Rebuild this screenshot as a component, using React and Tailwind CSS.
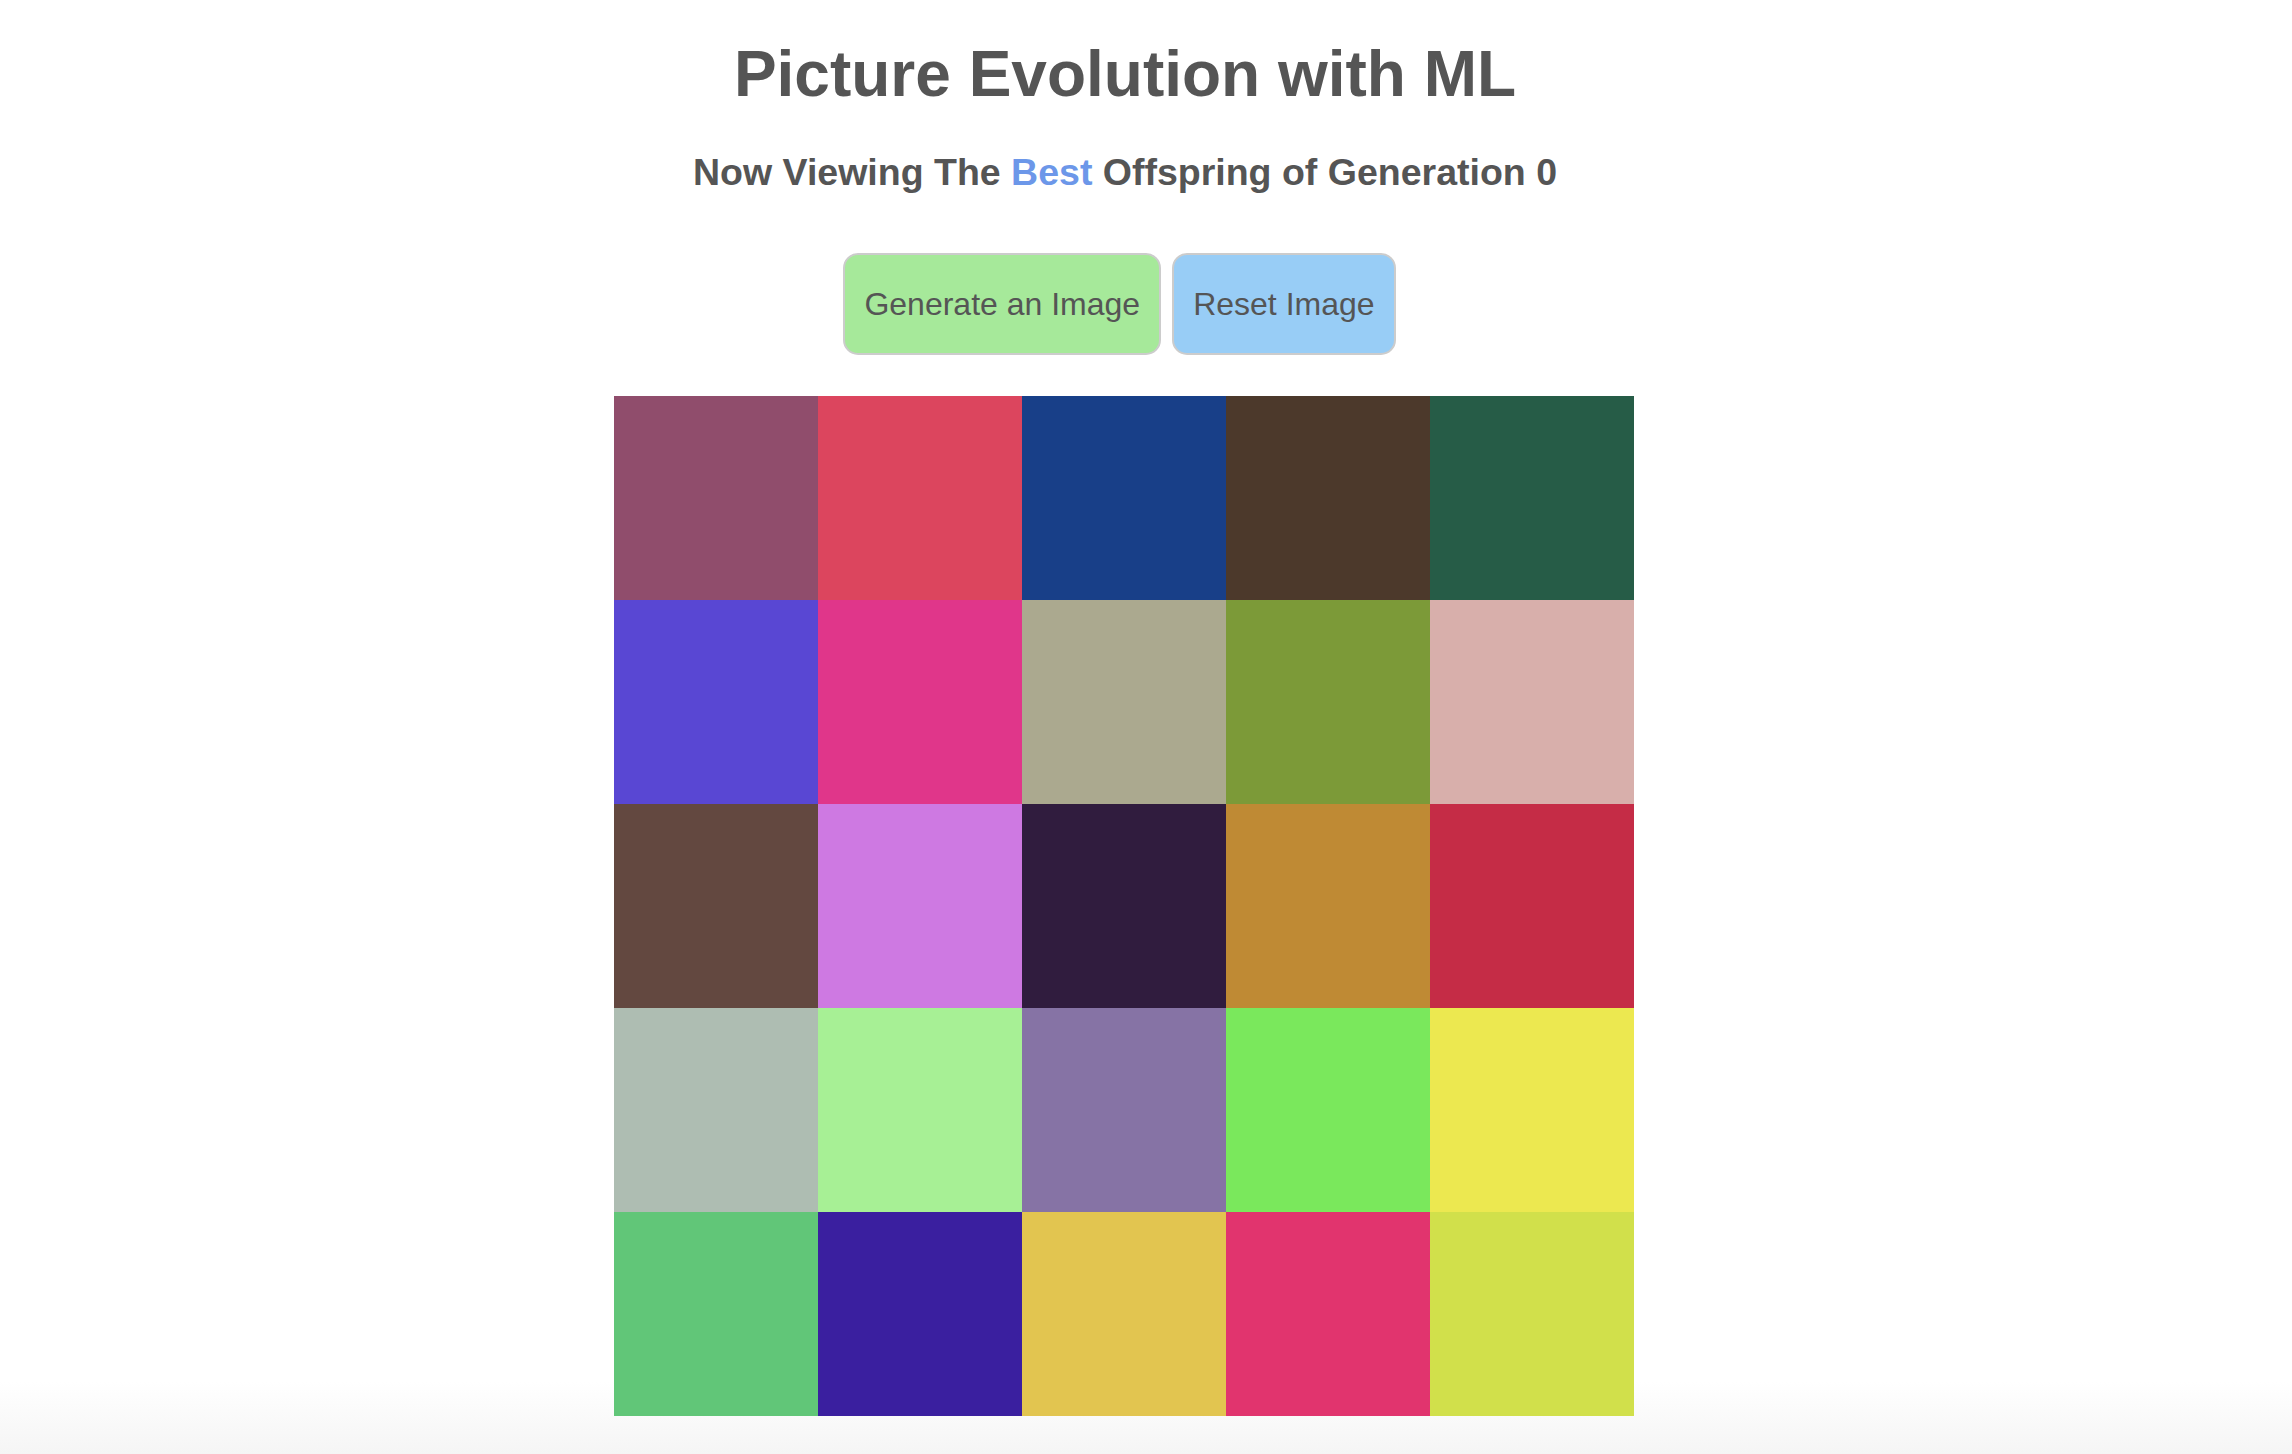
import React, { useState } from "react";

const START_COLORS = [
  "#904d6c", "#dc455e", "#183f88", "#4c392b", "#265c47",
  "#5947d3", "#e0368a", "#aba98f", "#7c9a38", "#d8afab",
  "#634840", "#ce79e2", "#301c3e", "#bf8a34", "#c52c46",
  "#aebdb2", "#a7f095", "#8673a5", "#7ae85c", "#ece850",
  "#61c678", "#3a1f9f", "#e2c550", "#e1346e", "#d1e04b",
];

const randomColor = () =>
  "#" + Math.floor(Math.random() * 0xffffff).toString(16).padStart(6, "0");

export default function App() {
  const [cells, setCells] = useState(START_COLORS);
  const [generation, setGeneration] = useState(0);

  const generate = () => {
    setCells((prev) => prev.map(() => randomColor()));
    setGeneration((g) => g + 1);
  };

  const reset = () => {
    setCells(START_COLORS);
    setGeneration(0);
  };

  return (
    <div className="min-h-screen bg-linear-to-b from-white from-[95%] to-[#f5f5f5] font-['Liberation_Sans',Arial,sans-serif] text-[#555555] pr-[42px]">
      <h1 className="pt-[42px] text-center text-[64px] font-bold leading-none">
        Picture Evolution with ML
      </h1>

      <h3 className="mt-[48px] text-center text-[37.5px] font-bold leading-none">
        Now Viewing The <span className="text-[#6c97e9]">Best</span> Offspring of Generation {generation}
      </h3>

      <div className="mt-[61px] flex justify-center gap-[11px] pr-[11px]">
        <button
          onClick={generate}
          className="rounded-[15px] border-2 border-[#cccccc] bg-[#a6e99a] px-[19px] py-[33px] text-[32px] leading-none"
        >
          Generate an Image
        </button>
        <button
          onClick={reset}
          className="rounded-[15px] border-2 border-[#cccccc] bg-[#98cdf6] px-[19px] py-[33px] text-[32px] leading-none"
        >
          Reset Image
        </button>
      </div>

      <div className="mt-[41px] flex justify-center pr-[2px]">
        <div className="grid grid-cols-5">
          {cells.map((c, i) => (
            <div key={i} className="h-[204px] w-[204px]" style={{ backgroundColor: c }} />
          ))}
        </div>
      </div>
    </div>
  );
}
